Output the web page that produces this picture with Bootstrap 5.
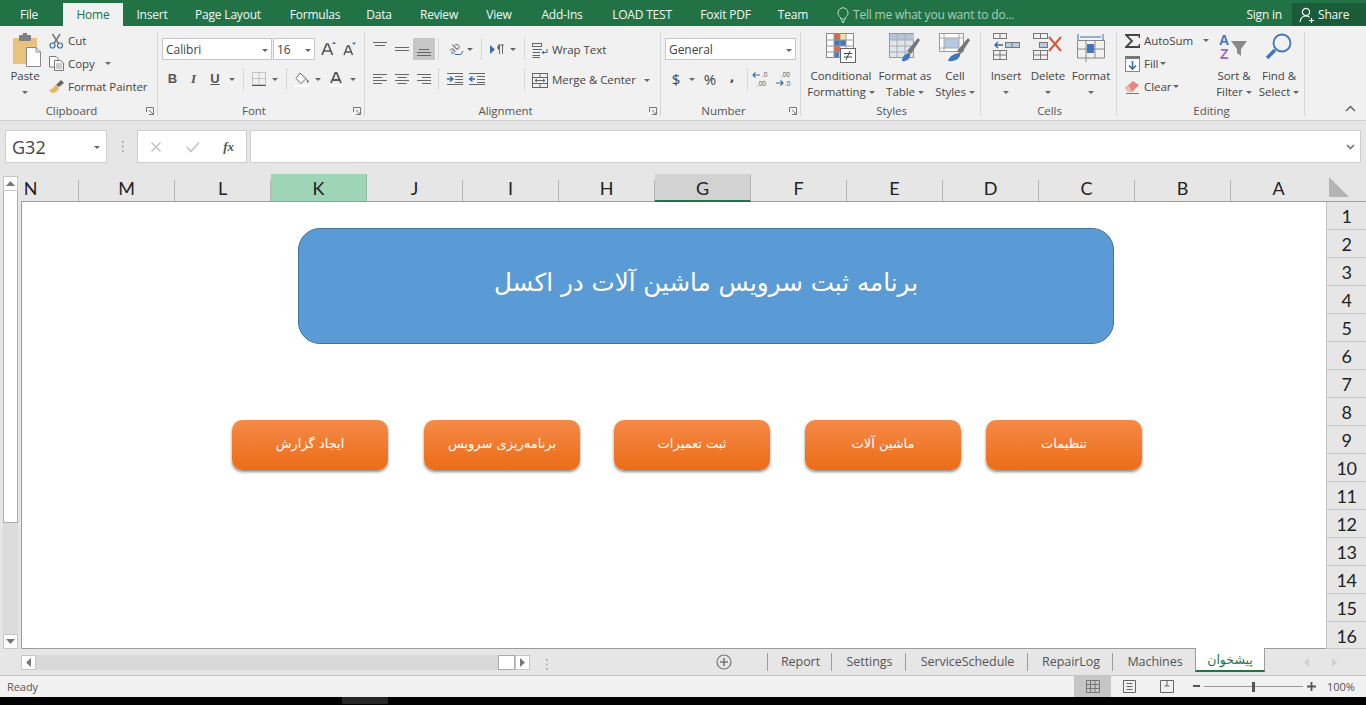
<!DOCTYPE html>
<html lang="en">
<head>
<meta charset="utf-8">
<title>Excel</title>
<link href="https://cdn.jsdelivr.net/npm/bootstrap@5.3.0/dist/css/bootstrap.min.css" rel="stylesheet">
<style>
html,body{height:705px;overflow:hidden;background:#000}
body{font-family:"Open Sans","Noto Sans",sans-serif;font-size:11.5px;color:#444;line-height:16px;letter-spacing:-.05px}
svg{display:block;flex:none}
.app{width:1366px;height:705px}
.tabbar{height:26px;background:#217346;color:#f4f8f6;display:grid;grid-template-columns:63px 60px 58px 94px 80px 48px 72px 48px 78px 82px 85px 50px 19px 1fr auto 74px;font-size:12px;letter-spacing:-.2px}
.rtab{height:26px;line-height:29px;text-align:center}
.rtab-file{padding-right:5px}
.rtab-on{background:#f1f1f1;color:#217346;height:23px;margin-top:3px;line-height:23px}
.tell{color:#a8d0ba;line-height:29px;gap:4px}
.signin{line-height:29px;padding-right:10px}
.share{background:#1a5c38;gap:3px;padding-left:7px;margin-top:3px;height:23px;line-height:21px}
.ribbon{height:95px;background:#f1f1f1;border-bottom:1px solid #d2d2d2}
.rgroup{margin-top:6px;height:84px;border-right:1px solid #d6d6d6;padding-left:4px}
.g1{width:158px}.g2{width:207px}.g3{width:296px}.g4{width:140px}.g5{width:180px}.g6{width:136px}.g7{width:188px}
.rbody{height:71px}
.rfoot{height:13px;line-height:16px;color:#555;display:grid;grid-template-columns:1fr auto 1fr;padding-right:2px}
.rfoot-l{padding-right:18px}
.launch{justify-self:end;margin-top:4px;margin-right:-15px}
.toprow{padding-top:6px}
.rowa{height:22px}
.rowb{height:22px;margin-top:8px}
.stack3{margin-top:-3px}
.line3{height:23px;line-height:23px;white-space:nowrap}
.mr4{margin-right:4px}
.big{text-align:center;padding-top:1px;line-height:16px;white-space:nowrap}
.bigicon{height:35px;display:flex;align-items:flex-start;justify-content:center}
.bigicon-r{padding-left:4px}
.w10{width:10px}.w20{width:20px}.w21{width:21px}.w22{width:22px}.w42{width:42px}.w44{width:44px}.w46{width:46px}.w56{width:56px}.w72{width:72px}.w91{width:91px}
.pl4{padding-left:4px}
.m1{margin-left:1px}.m2{margin-left:2px}.m3{margin-left:3px}.m5{margin-left:5px}.m6{margin-left:6px}.m7{margin-left:7px}.m8{margin-left:8px}.m10{margin-left:10px}.m36{margin-left:36px}
.slot{display:flex;align-items:center;justify-content:center;height:22px;flex:none}
.lbl1{padding-top:2px}
.slot-on{background:#c6c6c6}
.caret{width:0;height:0;border-left:3px solid transparent;border-right:3px solid transparent;border-top:3px solid #666;display:inline-block;vertical-align:middle;flex:none}
.vsep{width:1px;height:22px;background:#d6d6d6;flex:none}
.combo{height:22px;background:#fff;border:1px solid #c6c6c6;padding:2px 3px 0;line-height:18px;display:flex;align-items:center;justify-content:space-between;flex:none;font-size:12px}
.c110{width:110px}.c42{width:42px;margin-left:1px}.c131{width:131px}
.glyphB{font-family:"Liberation Sans",sans-serif;font-weight:700;color:#555;font-size:13px}
.gi{font-family:"Liberation Serif",serif;font-style:italic;font-weight:700;color:#555;font-size:13px}
.gu{text-decoration:underline}
.gnum{font-size:15px;color:#444}
.gcomma{padding-bottom:8px;font-weight:700}
.svgtxt{font-family:"Open Sans",sans-serif;font-size:6.5px;fill:#555}
.svgab{font-family:"Open Sans",sans-serif;font-size:10px;fill:#666}
.collapse-up{margin:auto 0 8px 40px}
.fbar{height:53px;background:#e6e6e6;padding:9px 5px 11px}
.namebox{width:102px;height:33px;background:#fff;border:1px solid #cfcfcf;font-size:18px;padding:2px 6px 0;color:#444;line-height:29px;letter-spacing:0}
.fdots{width:30px;color:#999}
.fxbox{width:110px;height:33px;background:#fff;border:1px solid #cfcfcf;padding:0 12px}
.finput{width:1111px;height:33px;margin-left:3px;background:#fff;border:1px solid #cfcfcf;padding-right:5px}
.sheetwrap{height:475px;background:#e6e6e6}
.vscroll{width:21px;padding:2px 3px 0 3px}
.sbtn{height:15px;width:15px;background:#fff;border:1px solid #c6c6c6;display:flex;align-items:center;justify-content:center;flex:none}
.vthumb{height:332px;width:15px;background:#fff;border:1px solid #ababab;border-top:0}
.vtrack{height:111px;width:15px;background:#dcdcdc}
.sheetmid{width:1305px;overflow:hidden}
.colhead{height:28px;background:#e6e6e6;border-bottom:1px solid #9c9c9c;display:flex;font-family:Lato,"Open Sans",sans-serif;font-size:18px;color:#222;letter-spacing:0}
.ch{width:96px;text-align:center;border-right:1px solid #b5b5b5;margin-top:6px;height:21px;line-height:16px;flex:none}
.ch-n{width:58px;padding-right:38px}
.ch-k{background:#9fd5b7;margin-top:0;height:27px;line-height:28px;border-right:1px solid #8fb9a2}
.ch-g{background:#d2d2d2;margin-top:0;height:28px;line-height:28px;border-bottom:2px solid #217346;border-right:1px solid #b5b5b5}
.canvas{height:447px;background:#fff;border-left:1px solid #9c9c9c;border-bottom:1px solid #9c9c9c;padding-top:26px}
.banner{margin-left:276px;width:816px;height:116px;background:#5b9bd5;border:1px solid #41719c;border-radius:22px;color:#fff;font-family:"DejaVu Sans",sans-serif;font-size:24.6px;line-height:1;padding-bottom:6px}
.btnrow{margin-left:210px;margin-top:76px}
.orange{width:156px;height:50px;border-radius:10px;background:linear-gradient(#f58a47,#ec6c18);box-shadow:0 2px 3px rgba(0,0,0,.45);color:#fff;font-family:"DejaVu Sans",sans-serif;font-size:13px;flex:none;padding-bottom:2px}
.g36{margin-left:36px}.g34{margin-left:34px}.g35{margin-left:35px}.g25{margin-left:25px}
.rowcol{width:40px;font-family:Lato,"Open Sans",sans-serif;font-size:18px;color:#222}
.corner{height:28px;border-bottom:1px solid #9c9c9c;padding:3px 0 0 3px}
.rh{height:28px;border-bottom:1px solid #c8c8c8;border-left:1px solid #c8c8c8;text-align:center;line-height:29px;letter-spacing:-.5px;flex:none}
.rh-last{height:27px}
.sbar{height:27px;background:#e6e6e6;border-bottom:1px solid #c4c4c4;color:#555;font-size:12.5px}
.hs{margin-left:21px;width:509px;height:15px;margin-top:6px}
.htrack{width:462px;height:15px;background:#d9d9d9}
.hthumb{width:17px;height:15px;background:#fff;border:1px solid #ababab}
.sdots{width:32px;margin-top:5px}
.plus{width:205px;margin-top:5px;padding-right:35px}
.stab{height:18px;margin-top:4px;border-left:1px solid #9c9c9c;line-height:18px;text-align:center;flex:none;padding-left:2px}
.s64{width:64px}.s74{width:74px}.s122{width:122px}.s85{width:85px}.s82{width:83px}
.stab-on{width:70px;height:24px;margin-top:-1px;background:#fff;color:#217346;border-left:1px solid #9c9c9c;border-right:1px solid #9c9c9c;border-bottom:2px solid #217346;font-family:"DejaVu Sans",sans-serif;font-size:12.5px;text-align:center;line-height:24px;flex:none}
.narr{margin:0 0 0 39px;gap:23px}
.status{height:21px;background:#f1f1f1;color:#555;padding-left:7px;font-size:11px}
.vb{width:37px;height:21px}
.vb-on{background:#c6c6c6}
.zoomline{width:99px;height:1px;background:#999;margin:0 4px}
.zthumb{width:3px;height:10px;background:#555;margin-left:-55px;margin-right:52px}
.pct{width:50px;text-align:center;font-size:11px}
.taskbar{height:7px;background:#000}
.tb-on{width:46px;height:7px;background:#262626;margin-left:342px}
</style>
</head>
<body>
<div class="app d-flex flex-column">

<div class="tabbar">
  <div class="rtab rtab-file">File</div><div class="rtab rtab-on">Home</div><div class="rtab">Insert</div><div class="rtab">Page Layout</div><div class="rtab">Formulas</div><div class="rtab">Data</div><div class="rtab">Review</div><div class="rtab">View</div><div class="rtab">Add-Ins</div><div class="rtab">LOAD TEST</div><div class="rtab">Foxit PDF</div><div class="rtab">Team</div>
  <div></div>
  <div class="tell d-flex align-items-center"><svg width="12" height="16" viewBox="0 0 12 16" fill="none" stroke="#bfe0cd"><path d="M3.5 10.5C2 9 1 8 1 5.8A5 5 0 0 1 11 5.8C11 8 10 9 8.5 10.5V12H3.5Z"/><path d="M4 14H8M5 15.5H7"/></svg><span>Tell me what you want to do...</span></div>
  <div class="signin">Sign in</div>
  <div class="share d-flex align-items-center"><svg width="16" height="16" viewBox="0 0 16 16" fill="none" stroke="#fff" stroke-width="1.2"><circle cx="7" cy="5" r="3.6"/><path d="M1 15C1.5 11 4 9 7 9C8.5 9 9.5 9.5 10.5 10.2M10 13.5H15M12.5 11V16"/></svg><span>Share</span></div>
</div>

<div class="ribbon d-flex">
  <!-- Clipboard -->
  <div class="rgroup g1 d-flex flex-column">
    <div class="rbody d-flex">
      <div class="w42 big">
        <div class="bigicon bigicon-r">
          <svg width="30" height="34" viewBox="0 0 30 34"><rect x="1" y="5" width="24" height="26" fill="#e8c27e"/><rect x="7" y="2" width="12" height="6" rx="1" fill="#7f7f7f"/><rect x="11" y="0" width="4" height="4" fill="#7f7f7f"/><path d="M14.500 14.500H24L28.500 19V33.500H14.500Z" fill="#fff" stroke="#888"/><path d="M24 14.500V19H28.500" fill="none" stroke="#888"/></svg>
        </div>
        <div>Paste</div><div><span class="caret"></span></div>
      </div>
      <div class="stack3 m3">
        <div class="line3 d-flex align-items-center"><svg class="mr4" width="15" height="16" viewBox="0 0 15 16" fill="none" stroke="#3b6ea5" stroke-width="1.200"><circle cx="3.500" cy="12.500" r="2.500"/><circle cx="11" cy="12.500" r="2.500"/><path d="M5 10.500L11 1M9.500 10.500L3.500 1" stroke="#777" stroke-width="1.500"/></svg>Cut</div>
        <div class="line3 d-flex align-items-center"><svg class="mr4" width="15" height="15" viewBox="0 0 15 15" fill="#fff" stroke="#777"><path d="M.5.500H7L9 2.500V11H.5Z"/><path d="M5.500 4.500H11.500L14.500 7V14.500H5.500Z"/><path d="M7 8H13M7 10H13M7 12H13" stroke="#999"/></svg>Copy<span class="caret m10"></span></div>
        <div class="line3 d-flex align-items-center"><svg class="mr4" width="15" height="14" viewBox="0 0 15 14"><path d="M0 10C3 10 5 7 6 5L10 8C9 11 6 13 3 13Z" fill="#e3b55c"/><path d="M7 5L12 0L15 3L10 7Z" fill="#666"/></svg>Format Painter</div>
      </div>
    </div>
    <div class="rfoot rfoot-l"><span></span><span>Clipboard</span><svg class="launch" width="8" height="8" viewBox="0 0 8 8" fill="none" stroke="#777"><path d="M.5 5V.5H7.500V7.500H3M3 3L7 7"/></svg></div>
  </div>
  <!-- Font -->
  <div class="rgroup g2 d-flex flex-column">
    <div class="rbody toprow">
      <div class="rowa d-flex">
        <div class="combo c110"><span>Calibri</span><span class="caret"></span></div>
        <div class="combo c42"><span>16</span><span class="caret"></span></div>
        <div class="slot w21 m3"><svg width="16" height="16" viewBox="0 0 16 16"><path d="M1 14L5.500 3H7L11.500 14M3 10H9.500" fill="none" stroke="#555" stroke-width="1.700"/><path d="M11 3L13 .5L15 3Z" fill="#3c78b5"/></svg></div>
        <div class="slot w21"><svg width="14" height="14" viewBox="0 0 14 14"><path d="M1 13L4.500 4H6L9.500 13M2.500 10H8" fill="none" stroke="#555" stroke-width="1.500"/><path d="M9 .5H13L11 3Z" fill="#3c78b5"/></svg></div>
      </div>
      <div class="rowb d-flex">
        <div class="slot w21 glyphB">B</div><div class="slot w21 gi">I</div><div class="slot w22 glyphB"><span class="gu">U</span></div><div class="slot w10 m1"><span class="caret"></span></div>
        <div class="vsep m6"></div>
        <div class="slot w20 m5"><svg width="14" height="14" viewBox="0 0 14 14" fill="none" stroke="#999" stroke-dasharray="1 1"><rect x=".5" y=".5" width="13" height="12"/><path d="M7 .5V12.500M.5 6.500H13.500"/><path d="M0 13.500H14" stroke="#555" stroke-dasharray="none"/></svg></div>
        <div class="slot w10 m1"><span class="caret"></span></div>
        <div class="vsep m6"></div>
        <div class="slot w20 m5"><svg width="16" height="15" viewBox="0 0 16 15"><path d="M6 1L12 6.500L7 11.500L2 6.500Z" fill="#fff" stroke="#666"/><path d="M12 6L15 9.500L13.500 11Z" fill="#3b6ea5"/><rect x="0" y="13" width="15" height="2" fill="#fff"/></svg></div>
        <div class="slot w10 m1"><span class="caret"></span></div>
        <div class="slot w20 m3"><svg width="14" height="15" viewBox="0 0 14 15"><path d="M2 11L6.300 1H7.700L12 11M4 8H10" fill="none" stroke="#555" stroke-width="1.800"/><rect y="13" width="14" height="2" fill="#fff"/></svg></div>
        <div class="slot w10 m2"><span class="caret"></span></div>
      </div>
    </div>
    <div class="rfoot rfoot-l"><span></span><span>Font</span><svg class="launch" width="8" height="8" viewBox="0 0 8 8" fill="none" stroke="#777"><path d="M.5 5V.5H7.500V7.500H3M3 3L7 7"/></svg></div>
  </div>
  <!-- Alignment -->
  <div class="rgroup g3 d-flex flex-column">
    <div class="rbody toprow">
      <div class="rowa d-flex">
        <div class="slot w22 align-items-start"><svg width="14" height="12" viewBox="0 0 14 12" stroke="#666"><path d="M0 4.500H14M2 7.500H12"/></svg></div>
        <div class="slot w22"><svg width="14" height="6" viewBox="0 0 14 6" stroke="#666"><path d="M0 1.500H14M0 4.500H14"/></svg></div>
        <div class="slot w22 slot-on align-items-end pb-1"><svg width="14" height="8" viewBox="0 0 14 8" stroke="#666"><path d="M2 1.500H12M0 4.500H14M0 7.500H14"/></svg></div>
        <div class="vsep m3"></div>
        <div class="slot w20 m6"><svg width="20" height="20" viewBox="0 0 20 20" fill="none"><text class="svgab" x="4" y="13" transform="rotate(-45 9 10)">ab</text><path d="M10 15.500H16L18 12" stroke="#3b6ea5"/></svg></div>
        <div class="slot w10"><span class="caret"></span></div>
        <div class="vsep m6"></div>
        <div class="slot w20 m5"><svg width="15" height="11" viewBox="0 0 15 11"><path d="M0 1L5 5.500L0 10Z" fill="#3b6ea5"/><path d="M8 1H14M9.500 1V10M12.500 1V10M9.500 5.500C7 5.500 7 1.500 9.500 1.500" fill="#666" stroke="#666"/></svg></div>
        <div class="slot w10 m1"><span class="caret"></span></div>
        <div class="vsep m6"></div>
        <div class="slot m7 text-nowrap lbl1"><svg class="mr4" width="16" height="15" viewBox="0 0 16 15" fill="none" stroke="#666"><rect x=".5" y=".5" width="9" height="3"/><path d="M.5 6.500H10M.5 9.500H8M.5 12.500H8M.5 14.500H8"/><path d="M15 6V9.500H10.500M12 8L10 9.500L12 11" stroke="#3b6ea5"/></svg>Wrap Text</div>
      </div>
      <div class="rowb d-flex">
        <div class="slot w22"><svg width="14" height="12" viewBox="0 0 14 12" stroke="#666"><path d="M0 1.500H14M0 4.500H9M0 7.500H14M0 10.500H9"/></svg></div>
        <div class="slot w22"><svg width="14" height="12" viewBox="0 0 14 12" stroke="#666"><path d="M0 1.500H14M2.500 4.500H11.500M0 7.500H14M2.500 10.500H11.500"/></svg></div>
        <div class="slot w22"><svg width="14" height="12" viewBox="0 0 14 12" stroke="#666"><path d="M0 1.500H14M5 4.500H14M0 7.500H14M5 10.500H14"/></svg></div>
        <div class="vsep m3"></div>
        <div class="slot w22 m5"><svg width="16" height="12" viewBox="0 0 16 12"><path d="M0 .5H16M8 3.500H16M8 6.500H16M8 9.500H16M0 11.500H16" stroke="#666" fill="none"/><path d="M0 6H5M3 3.500L6 6L3 8.500" stroke="#3b6ea5" stroke-width="1.500" fill="none"/></svg></div>
        <div class="slot w22"><svg width="16" height="12" viewBox="0 0 16 12"><path d="M0 .5H16M8 3.500H16M8 6.500H16M8 9.500H16M0 11.500H16" stroke="#666" fill="none"/><path d="M6 6H1M3.500 3.500L.5 6L3.500 8.500" stroke="#3b6ea5" stroke-width="1.500" fill="none"/></svg></div>
        <div class="vsep m36"></div>
        <div class="slot m7 text-nowrap lbl1"><svg class="mr4" width="16" height="15" viewBox="0 0 16 15" fill="none" stroke="#666"><rect x=".5" y=".5" width="15" height="14"/><path d="M.5 4.500H15.500M.5 10.500H15.500M3 7.500H13M8 .5V4.500M8 10.500V14.500"/><path d="M3 7.500L5 6M3 7.500L5 9M13 7.500L11 6M13 7.500L11 9" stroke="#3b6ea5"/></svg>Merge &amp; Center<span class="caret m8"></span></div>
      </div>
    </div>
    <div class="rfoot rfoot-l"><span></span><span>Alignment</span><svg class="launch" width="8" height="8" viewBox="0 0 8 8" fill="none" stroke="#777"><path d="M.5 5V.5H7.500V7.500H3M3 3L7 7"/></svg></div>
  </div>
  <!-- Number -->
  <div class="rgroup g4 d-flex flex-column">
    <div class="rbody toprow">
      <div class="rowa d-flex"><div class="combo c131"><span>General</span><span class="caret"></span></div></div>
      <div class="rowb d-flex">
        <div class="slot w20 m1 gnum">$</div><div class="slot w10 m1"><span class="caret"></span></div>
        <div class="slot w20 m3 gnum">%</div><div class="slot w20 m2 gnum gcomma">,</div>
        <div class="vsep m5"></div>
        <div class="slot w20 m3"><svg width="20" height="20" viewBox="0 0 20 20" fill="none"><path d="M9 6H2M4.500 3.500L2 6L4.500 8.500" stroke="#3b6ea5" stroke-width="1.200"/><text class="svgtxt"><tspan x="11" y="8">.0</tspan><tspan x="6" y="17">.00</tspan></text></svg></div>
        <div class="slot w20 m3"><svg width="20" height="20" viewBox="0 0 20 20" fill="none"><path d="M2 14H9M6.500 11.500L9 14L6.500 16.500" stroke="#3b6ea5" stroke-width="1.200"/><text class="svgtxt"><tspan x="7" y="8">.00</tspan><tspan x="11" y="17">.0</tspan></text></svg></div>
      </div>
    </div>
    <div class="rfoot rfoot-l"><span></span><span>Number</span><svg class="launch" width="8" height="8" viewBox="0 0 8 8" fill="none" stroke="#777"><path d="M.5 5V.5H7.500V7.500H3M3 3L7 7"/></svg></div>
  </div>
  <!-- Styles -->
  <div class="rgroup g5 d-flex flex-column">
    <div class="rbody d-flex">
      <div class="w72 big">
        <div class="bigicon"><svg width="30" height="30" viewBox="0 0 30 30"><rect x=".5" y=".5" width="27" height="24" fill="#fff" stroke="#888"/><rect x="8" y="1" width="6" height="6" fill="#d9644b"/><rect x="8" y="7" width="12" height="6" fill="#3f78b8"/><rect x="8" y="13" width="6" height="6" fill="#e0654b"/><rect x="8" y="19" width="5" height="5" fill="#4a7fbc"/><rect x="14" y="1" width="6" height="6" fill="#f6e3a8"/><path d="M8 0V25M14 0V25M20 0V25M0 7H28M0 13H28M0 19H28" stroke="#999" fill="none"/><rect x="14.500" y="15.500" width="15" height="14" fill="#fff" stroke="#666"/><path d="M18 20.500H26M18 24H26M24 18L20 27" stroke="#444" fill="none"/></svg></div>
        <div>Conditional</div><div>Formatting <span class="caret"></span></div>
      </div>
      <div class="w56 big">
        <div class="bigicon"><svg width="32" height="30" viewBox="0 0 32 30"><rect x=".5" y=".5" width="24" height="24" fill="#dfe6ee" stroke="#999"/><rect x="1" y="1" width="24" height="6" fill="#b4c6dc"/><path d="M8 1V25M16 1V25M1 7H25M1 13H25M1 19H25" stroke="#aaa" fill="none"/><path d="M18 18L29 5L31 7L22 21Z" fill="#777"/><path d="M13 28C13 23 17 20 21 20C22 24 19 29 13 28Z" fill="#3f78b8"/></svg></div>
        <div>Format as</div><div>Table <span class="caret"></span></div>
      </div>
      <div class="w44 big">
        <div class="bigicon"><svg width="32" height="30" viewBox="0 0 32 30"><rect x=".5" y=".5" width="24" height="18" fill="#fff" stroke="#999"/><rect x="5" y="5" width="15" height="10" fill="#b4c9e2"/><path d="M5 1V19M20 1V19M1 5H25M1 15H25" stroke="#aaa" fill="none"/><path d="M18 18L29 5L31 7L22 21Z" fill="#777"/><path d="M9 28C10 23 16 20 21 20C22 24 18 29 9 28Z" fill="#3f78b8"/></svg></div>
        <div>Cell</div><div>Styles <span class="caret"></span></div>
      </div>
    </div>
    <div class="rfoot"><span></span><span>Styles</span><span></span></div>
  </div>
  <!-- Cells -->
  <div class="rgroup g6 d-flex flex-column">
    <div class="rbody d-flex">
      <div class="w42 big"><div class="bigicon"><svg width="27" height="28" viewBox="0 0 27 28" fill="none" stroke="#777"><rect x=".5" y=".5" width="13" height="5"/><path d="M7 .5V5.500"/><rect x=".5" y="17.500" width="13" height="9"/><path d="M7 17.500V26.500M.5 22H13.500"/><rect x="12.500" y="9.500" width="14" height="5" fill="#b7cce3"/><path d="M19 9.500V14.500"/><path d="M10 12H2M5 9L2 12L5 15" stroke="#3b6ea5" stroke-width="1.500"/></svg></div><div>Insert</div><div><span class="caret"></span></div></div>
      <div class="w42 big"><div class="bigicon"><svg width="30" height="28" viewBox="0 0 30 28" fill="none" stroke="#777"><rect x=".5" y=".5" width="14" height="5"/><path d="M7.500 .5V5.500"/><rect x=".5" y="17.500" width="14" height="9"/><path d="M7.500 17.500V26.500M.5 22H14.500"/><rect x="6.500" y="9.500" width="8" height="5" fill="#b7cce3"/><path d="M16 4L28 18M28 4L16 18" stroke="#d9563c" stroke-width="2"/></svg></div><div>Delete</div><div><span class="caret"></span></div></div>
      <div class="w44 big"><div class="bigicon"><svg width="28" height="30" viewBox="0 0 28 30" fill="none" stroke="#888"><path d="M1 1V7M26 1V7M3 4H24" stroke="#3b6ea5"/><path d="M.5 7.500H27.500V25H.5ZM9 7.500V29M18 7.500V25M.5 16H27.500"/><rect x="10" y="11" width="7" height="9" fill="#3f78b8" stroke="none"/></svg></div><div>Format</div><div><span class="caret"></span></div></div>
    </div>
    <div class="rfoot"><span></span><span>Cells</span><span></span></div>
  </div>
  <!-- Editing -->
  <div class="rgroup g7 d-flex flex-column">
    <div class="rbody d-flex">
      <div class="w91 stack3 pl4">
        <div class="line3 d-flex align-items-center"><svg class="mr4" width="15" height="14" viewBox="0 0 15 14"><path d="M14.500 4V1H1L7 7L1 13H14.500V10" fill="none" stroke="#444" stroke-width="1.800"/></svg>AutoSum<span class="caret m10"></span></div>
        <div class="line3 d-flex align-items-center"><svg class="mr4" width="15" height="16" viewBox="0 0 15 16"><rect x=".5" y=".5" width="14" height="15" fill="#fff" stroke="#888"/><rect width="15" height="3" fill="#777"/><path d="M7.500 5V13M4 9.500L7.500 13L11 9.500" fill="none" stroke="#3b6ea5" stroke-width="1.600"/></svg>Fill<span class="caret m2"></span></div>
        <div class="line3 d-flex align-items-center"><svg class="mr4" width="15" height="14" viewBox="0 0 15 14"><path d="M0 8L8 1L14 5L7 12H3Z" fill="#e8857f"/><path d="M0 8L3 12H7L4 6Z" fill="#f3bdb6"/><path d="M1 13.500H14" stroke="#777"/></svg>Clear<span class="caret m2"></span></div>
      </div>
      <div class="w44 big"><div class="bigicon"><svg width="30" height="28" viewBox="0 0 30 28"><text x="0" y="12" font-family="Liberation Sans" font-size="14" font-weight="700" fill="#3f78b8">A</text><text x="1" y="26" font-family="Liberation Sans" font-size="14" font-weight="700" fill="#9a6dbb">Z</text><path d="M12 8H28L22 16V23L18 20V16Z" fill="#888"/></svg></div><div>Sort &amp;</div><div>Filter <span class="caret"></span></div></div>
      <div class="w46 big"><div class="bigicon"><svg width="28" height="28" viewBox="0 0 28 28" fill="none" stroke="#3f78b8"><circle cx="17" cy="10" r="8.500" stroke-width="1.800"/><path d="M10 17L2 25" stroke-width="3.500"/></svg></div><div>Find &amp;</div><div>Select <span class="caret"></span></div></div>
    </div>
    <div class="rfoot"><span></span><span>Editing</span><span></span></div>
  </div>
  <div class="collapse-up"><svg width="11" height="7" viewBox="0 0 11 7" fill="none" stroke="#666" stroke-width="1.500"><path d="M1 6L5.500 1.500L10 6"/></svg></div>
</div>

<div class="fbar d-flex">
  <div class="namebox d-flex align-items-center justify-content-between"><span>G32</span><span class="caret"></span></div>
  <div class="fdots d-flex align-items-center justify-content-center"><svg width="3" height="11" viewBox="0 0 3 11" fill="#aaa"><rect x="1" width="1.500" height="2"/><rect x="1" y="4.500" width="1.500" height="2"/><rect x="1" y="9" width="1.500" height="2"/></svg></div>
  <div class="fxbox d-flex align-items-center justify-content-between">
    <svg width="12" height="12" viewBox="0 0 12 12" stroke="#c4c4c4" stroke-width="1.600"><path d="M1.500 1.500L10.500 10.500M10.500 1.500L1.500 10.500"/></svg>
    <svg width="14" height="12" viewBox="0 0 14 12" fill="none" stroke="#c4c4c4" stroke-width="1.800"><path d="M1 6L5 10.500L13 1.500"/></svg>
    <span class="gi">fx</span>
  </div>
  <div class="finput d-flex align-items-center justify-content-end"><svg width="9" height="6" viewBox="0 0 9 6" fill="none" stroke="#777" stroke-width="1.600"><path d="M1 1L4.500 4.500L8 1"/></svg></div>
</div>

<div class="sheetwrap d-flex">
  <div class="vscroll d-flex flex-column">
    <div class="sbtn"><svg width="9" height="5" viewBox="0 0 9 5" fill="#777"><path d="M0 5L4.500 0L9 5Z"/></svg></div>
    <div class="vthumb"></div>
    <div class="vtrack"></div>
    <div class="sbtn"><svg width="9" height="5" viewBox="0 0 9 5" fill="#777"><path d="M0 0L4.500 5L9 0Z"/></svg></div>
  </div>
  <div class="sheetmid d-flex flex-column">
    <div class="colhead">
      <div class="ch ch-n">N</div><div class="ch">M</div><div class="ch">L</div><div class="ch ch-k">K</div><div class="ch">J</div><div class="ch">I</div><div class="ch">H</div><div class="ch ch-g">G</div><div class="ch">F</div><div class="ch">E</div><div class="ch">D</div><div class="ch">C</div><div class="ch">B</div><div class="ch">A</div>
    </div>
    <div class="canvas">
      <div class="banner d-flex align-items-center justify-content-center" dir="rtl">برنامه ثبت سرویس ماشین آلات در اکسل</div>
      <div class="btnrow d-flex">
        <div class="orange d-flex align-items-center justify-content-center" dir="rtl">ایجاد گزارش</div>
        <div class="orange g36 d-flex align-items-center justify-content-center" dir="rtl">برنامه‌ریزی سرویس</div>
        <div class="orange g34 d-flex align-items-center justify-content-center" dir="rtl">ثبت تعمیرات</div>
        <div class="orange g35 d-flex align-items-center justify-content-center" dir="rtl">ماشین آلات</div>
        <div class="orange g25 d-flex align-items-center justify-content-center" dir="rtl">تنظیمات</div>
      </div>
    </div>
  </div>
  <div class="rowcol d-flex flex-column">
    <div class="corner"><svg width="20" height="20" viewBox="0 0 20 20" fill="#b4b4b4"><path d="M0 0L20 20H0Z"/></svg></div>
    <div class="rh">1</div><div class="rh">2</div><div class="rh">3</div><div class="rh">4</div><div class="rh">5</div><div class="rh">6</div><div class="rh">7</div><div class="rh">8</div><div class="rh">9</div><div class="rh">10</div><div class="rh">11</div><div class="rh">12</div><div class="rh">13</div><div class="rh">14</div><div class="rh">15</div><div class="rh rh-last">16</div>
  </div>
</div>

<div class="sbar d-flex">
  <div class="hs d-flex">
    <div class="sbtn"><svg width="5" height="9" viewBox="0 0 5 9" fill="#777"><path d="M5 0L0 4.500L5 9Z"/></svg></div>
    <div class="htrack"></div>
    <div class="hthumb"></div>
    <div class="sbtn"><svg width="5" height="9" viewBox="0 0 5 9" fill="#777"><path d="M0 0L5 4.500L0 9Z"/></svg></div>
  </div>
  <div class="sdots d-flex align-items-center justify-content-center"><svg width="3" height="11" viewBox="0 0 3 11" fill="#aaa"><rect x="1" width="1.500" height="2"/><rect x="1" y="4.500" width="1.500" height="2"/><rect x="1" y="9" width="1.500" height="2"/></svg></div>
  <div class="plus d-flex justify-content-end align-items-start"><svg width="16" height="16" viewBox="0 0 16 16" fill="none" stroke="#777" stroke-width="1.200"><circle cx="8" cy="8" r="7"/><path d="M8 4V12M4 8H12" stroke-width="1.600"/></svg></div>
  <div class="stab s64">Report</div><div class="stab s74">Settings</div><div class="stab s122">ServiceSchedule</div><div class="stab s85">RepairLog</div><div class="stab s82">Machines</div>
  <div class="stab-on" dir="rtl">پیشخوان</div>
  <div class="narr d-flex align-items-center"><svg width="5" height="9" viewBox="0 0 5 9" fill="#d0d0d0"><path d="M5 0L0 4.500L5 9Z"/></svg><svg width="5" height="9" viewBox="0 0 5 9" fill="#d0d0d0"><path d="M0 0L5 4.500L0 9Z"/></svg></div>
</div>

<div class="status d-flex align-items-center">
  <div class="me-auto">Ready</div>
  <div class="vb vb-on d-flex align-items-center justify-content-center"><svg width="14" height="13" viewBox="0 0 14 13" fill="none" stroke="#777"><path d="M.5.500H13.500V12.500H.5ZM4.500.5V12.500M9 .5V12.500M.5 4.500H13.500M.5 8.500H13.500"/></svg></div>
  <div class="vb d-flex align-items-center justify-content-center"><svg width="13" height="13" viewBox="0 0 13 13" fill="none" stroke="#666"><path d="M.5.500H12.500V12.500H.5ZM3.500 3.500H9.500M3.500 6.500H9.500M3.500 9.500H9.500"/></svg></div>
  <div class="vb d-flex align-items-center justify-content-center"><svg width="14" height="13" viewBox="0 0 14 13" fill="none" stroke="#666"><path d="M.5.500H13.500V12.500H.5M.5.500V12.500M7 .5V6M4.500 6H9.500"/></svg></div>
  <div class="d-flex align-items-center ms-2"><svg width="7" height="3" viewBox="0 0 7 3" fill="#555"><rect width="7" height="2"/></svg><div class="zoomline"></div><div class="zthumb"></div><svg width="9" height="9" viewBox="0 0 9 9" stroke="#555" stroke-width="1.800"><path d="M0 4.500H9M4.500 0V9"/></svg></div>
  <div class="pct">100%</div>
</div>
<div class="taskbar"><div class="tb-on"></div></div>

</div>
</body>
</html>
